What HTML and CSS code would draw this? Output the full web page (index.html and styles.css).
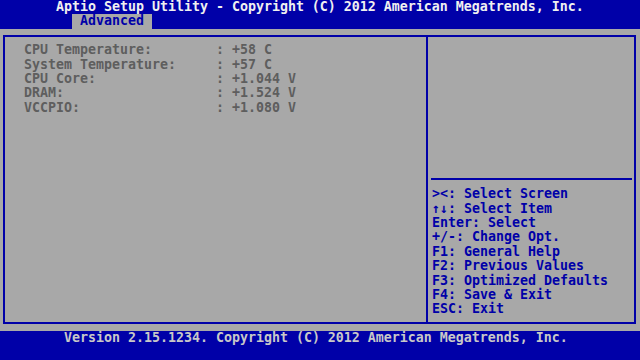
FILE: index.html
```html
<!DOCTYPE html>
<html lang="en">
<head>
    <meta charset="UTF-8">
    <meta name="viewport" content="width=device-width, initial-scale=1.0">
    <title>Aptio Setup Utility</title>
    <link rel="stylesheet" href="styles.css">
</head>
<body>
    <div class="screen">
        <header class="top">
            <div class="title">Aptio Setup Utility - Copyright (C) 2012 American Megatrends, Inc.</div>
            <div class="tabs">
                <span class="tab">Advanced</span>
            </div>
        </header>

        <main class="main">
            <div class="frame">
                <section class="left">
                    <div class="sensors">
                        <span>CPU Temperature:</span><span>:</span><span>+58 C</span>
                        <span>System Temperature:</span><span>:</span><span>+57 C</span>
                        <span>CPU Core:</span><span>:</span><span>+1.044 V</span>
                        <span>DRAM:</span><span>:</span><span>+1.524 V</span>
                        <span>VCCPIO:</span><span>:</span><span>+1.080 V</span>
                    </div>
                </section>
                <aside class="right">
                    <div class="help-top"></div>
                    <ul class="keys">
                        <li>&gt;&lt;: Select Screen</li>
                        <li>↑↓: Select Item</li>
                        <li>Enter: Select</li>
                        <li>+/-: Change Opt.</li>
                        <li>F1: General Help</li>
                        <li>F2: Previous Values</li>
                        <li>F3: Optimized Defaults</li>
                        <li>F4: Save &amp; Exit</li>
                        <li>ESC: Exit</li>
                    </ul>
                </aside>
            </div>
        </main>

        <footer class="bottom">Version 2.15.1234. Copyright (C) 2012 American Megatrends, Inc.</footer>
    </div>
</body>
</html>
```

FILE: styles.css
```css
body {
    margin: 0;
    padding: 0;
    background-color: #0000a8;
    font-family: "DejaVu Sans Mono", "Liberation Mono", monospace;
    font-size: 13.29px;
    font-weight: bold;
    line-height: 14.4px;
}
.screen {
    width: 640px;
    height: 360px;
    display: flex;
    flex-direction: column;
    overflow: hidden;
}
.top {
    height: 28.8px;
    flex: none;
    background-color: #0000a8;
    color: #f0f0f0;
}
.title {
    height: 14.4px;
    padding-left: 56px;
    white-space: nowrap;
}
.tabs {
    height: 14.4px;
    padding-left: 72px;
    display: flex;
}
.tab {
    width: 72px;
    padding-left: 8px;
    background-color: #a8a8a8;
    color: #0000a8;
}
.main {
    height: 302.4px;
    flex: none;
    box-sizing: border-box;
    padding: 6.2px 4px 7.2px 3px;
    background-color: #a8a8a8;
    display: flex;
}
.frame {
    flex: 1;
    display: flex;
    border: 2px solid #0000a8;
}
.left {
    width: 421px;
    flex: none;
    box-sizing: border-box;
    padding: 6.2px 0 0 19px;
}
.sensors {
    display: grid;
    grid-template-columns: 192px 16px auto;
    grid-auto-rows: 14.4px;
    color: #5e5e5e;
    white-space: nowrap;
}
.right {
    flex: 1;
    display: flex;
    flex-direction: column;
    border-left: 2px solid #0000a8;
    padding-left: 3px;
}
.help-top {
    height: 141px;
    flex: none;
    border-bottom: 2px solid #0000a8;
    margin-right: 2px;
}
.keys {
    list-style: none;
    margin: 0;
    padding: 7.2px 0 0 1px;
    color: #0000a8;
    white-space: nowrap;
}
.keys li {
    height: 14.4px;
}
.bottom {
    height: 28.8px;
    flex: none;
    padding-left: 64px;
    color: #c8c8c8;
    background-color: #0000a8;
    white-space: nowrap;
}
```
